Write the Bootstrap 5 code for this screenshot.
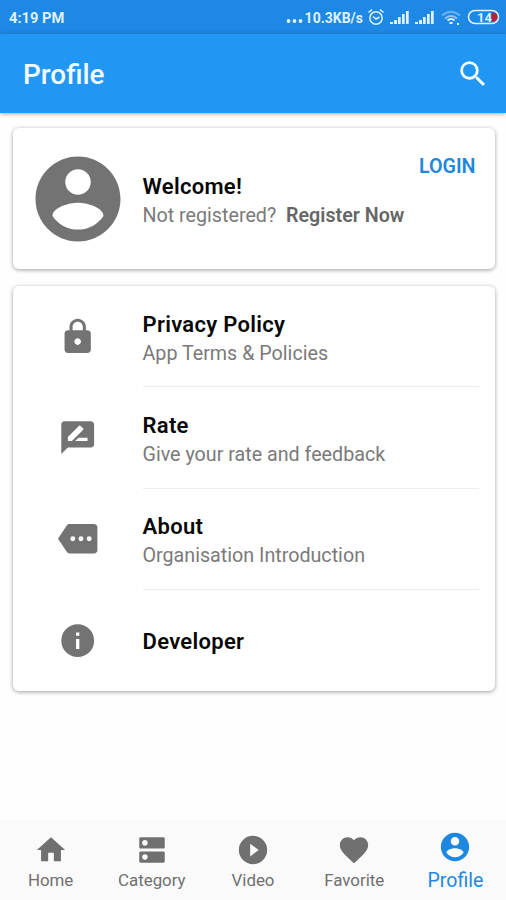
<!DOCTYPE html>
<html lang="en">
<head>
<meta charset="utf-8">
<meta name="viewport" content="width=device-width, initial-scale=1">
<title>Profile</title>
<link href="https://cdn.jsdelivr.net/npm/bootstrap@5.3.0/dist/css/bootstrap.min.css" rel="stylesheet">
<style>
body{font-family:Roboto,"Liberation Sans",sans-serif;background:#fefefe;color:#0a0a0a;height:900px;overflow:hidden}
svg{display:block;fill:currentColor;flex:none}
.status{background:#1e88e5;height:34px;padding:0 6px 0 9px;font-size:14.700px;font-weight:700;color:#dff1ff;line-height:36px}
.status svg{align-self:center}
.status .rate-text{font-size:14px}
.appbar{background:#2196f3;height:79px;padding:1px 16px 0 23px;box-shadow:0 1px 4px rgba(0,0,0,.35);color:#f4fbff}
.appbar h1{font-size:27.900px;font-weight:500;margin:2px 0 0}
.panel{border:0;border-radius:6px;margin:0 11.500px 0 12.500px;box-shadow:0 1px 4px rgba(0,0,0,.38)}
.user-panel{margin-top:15px;height:141px;padding:0 19px 0 14px}
.menu-panel{margin-top:17px;height:405px}
.avatar{width:102px;height:102px;color:#737373}
.user-text{margin-left:14px;padding-top:6px}
.ttl{font-size:22px;font-weight:600;line-height:28px;color:#080808;letter-spacing:.3px}
.sub{font-size:19.700px;line-height:29px;color:#7a7a7a;white-space:pre}
.sub b{font-weight:600;color:#666}
.login{font-size:19.700px;font-weight:600;color:#1e88dc;line-height:24px;margin-top:26.500px}
.entry{height:101.300px}
.entry .ico{width:130px;padding-left:1px;color:#737373}
.entry .txt{margin-right:16px;border-bottom:1px solid #ececec;padding-top:6px}
.entry:last-child .txt{border-bottom:0;padding-top:3px}
.tabs{height:80px;background:#fafafa;color:#707070}
.tab{flex:1 1 0;font-size:16.900px;line-height:27px;padding-top:13px}
.tab.on{color:#1e88e0;font-size:19.500px;line-height:33px;padding-top:10px}
</style>
</head>
<body class="d-flex flex-column">
<header>
<div class="status d-flex justify-content-between">
  <span>4:19 PM</span>
  <div class="d-flex">
    <svg width="19" height="16"><circle cx="2.500" cy="12" r="1.900"/><circle cx="8.500" cy="12" r="1.900"/><circle cx="14.500" cy="12" r="1.900"/></svg>
    <span class="rate-text">10.3KB/s</span>
    <svg class="ms-1" width="18" height="18" style="fill:none" stroke="currentColor" stroke-width="1.500"><circle cx="9" cy="10" r="6.200"/><path d="M1.500 4.500 5 1.700M16.500 4.500 13 1.700M6 8.500l3 2.500 3.500-2"/></svg>
    <svg class="ms-1" width="22" height="18"><path d="M1 16v-2h3v2zM5 16v-4h3v4zM9 16V9h2.700v7zM13 16V6h2.700v10zM17 16V3h2.700v13z"/></svg>
    <svg class="ms-1" width="22" height="18"><path d="M0 16v-2h3v2zM4 16v-4h3v4zM8 16V9h2.700v7zM12 16V6h2.700v10zM16 16V3h2.700v13z"/></svg>
    <svg class="ms-1" width="20" height="18" style="fill:none" stroke="currentColor" stroke-width="1.800"><path d="M1 7.500Q10 0 19 7.500" opacity=".4"/><path d="M4 10.500Q10 5.500 16 10.500" opacity=".6"/><path d="M6.500 12.500Q10 9.500 13.500 12.500"/><path d="M8.500 15h3M16 16h2"/></svg>
    <svg width="39" height="18"><rect x="7.500" y="2.500" width="30" height="13" rx="6.500" style="fill:none" stroke="currentColor" stroke-width="1.600"/><path d="M30.500 4.500h1.500a4.500 4.500 0 0 1 2 8.500L32 13.800h-1.500z" fill="#b3223c"/><text x="16" y="13.800" font-size="13" font-weight="700">14</text></svg>
  </div>
</div>
<div class="appbar d-flex align-items-center justify-content-between">
  <h1>Profile</h1>
  <svg width="34" height="34" viewBox="0 0 24 24"><path d="M15.500 14h-.79l-.28-.27A6.470 6.470 0 0 0 16 9.500 6.500 6.500 0 1 0 9.500 16c1.610 0 3.090-.59 4.230-1.570l.27.28v.79l5 4.990L20.490 19l-4.990-5zm-6 0C7.010 14 5 11.990 5 9.500S7.010 5 9.500 5 14 7.010 14 9.500 11.990 14 9.500 14z"/></svg>
</div>
</header>
<main class="flex-grow-1">
<section class="card panel user-panel flex-row align-items-center">
  <svg class="avatar" viewBox="0 0 24 24"><path d="M12 2C6.480 2 2 6.480 2 12s4.480 10 10 10 10-4.480 10-10S17.520 2 12 2zm0 3c1.660 0 3 1.340 3 3s-1.340 3-3 3-3-1.340-3-3 1.340-3 3-3zm0 14.200c-2.500 0-4.710-1.280-6-3.220.03-1.990 4-3.080 6-3.080 1.990 0 5.970 1.090 6 3.080-1.290 1.940-3.500 3.220-6 3.220z"/></svg>
  <div class="flex-grow-1 user-text">
    <div class="ttl">Welcome!</div>
    <div class="sub">Not registered?  <b>Register Now</b></div>
  </div>
  <div class="login align-self-start">LOGIN</div>
</section>
<section class="card panel menu-panel">
  <div class="entry d-flex">
    <div class="ico d-flex align-items-center justify-content-center"><svg width="39.400" height="39.400" viewBox="0 0 24 24"><path d="M18 8h-1V6c0-2.760-2.240-5-5-5S7 3.240 7 6v2H6c-1.100 0-2 .9-2 2v10c0 1.100.9 2 2 2h12c1.100 0 2-.9 2-2V10c0-1.100-.9-2-2-2zm-6 9c-1.100 0-2-.9-2-2s.9-2 2-2 2 .9 2 2-.9 2-2 2zm3.100-9H8.900V6c0-1.710 1.390-3.100 3.100-3.100s3.100 1.390 3.100 3.100v2z"/></svg></div>
    <div class="txt flex-grow-1 d-flex flex-column justify-content-center"><div class="ttl">Privacy Policy</div><div class="sub">App Terms &amp; Policies</div></div>
  </div>
  <div class="entry d-flex">
    <div class="ico d-flex align-items-center justify-content-center"><svg width="39.400" height="39.400" viewBox="0 0 24 24"><path d="M20 2H4c-1.100 0-1.990.9-1.990 2L2 22l4-4h14c1.100 0 2-.9 2-2V4c0-1.100-.9-2-2-2zM6 14v-2.470l6.880-6.880c.2-.2.51-.2.71 0l1.770 1.770c.2.2.2.51 0 .71L8.470 14H6zm12 0h-7.500l2-2H18v2z"/></svg></div>
    <div class="txt flex-grow-1 d-flex flex-column justify-content-center"><div class="ttl">Rate</div><div class="sub">Give your rate and feedback</div></div>
  </div>
  <div class="entry d-flex">
    <div class="ico d-flex align-items-center justify-content-center"><svg width="39.400" height="39.400" viewBox="0 0 24 24"><path d="M22 3H7c-.69 0-1.230.35-1.590.88L0 12l5.410 8.110c.36.53.9.89 1.590.89h15c1.100 0 2-.9 2-2V5c0-1.100-.9-2-2-2zM9 13.500a1.500 1.500 0 1 1 0-3 1.500 1.500 0 0 1 0 3zm5 0a1.500 1.500 0 1 1 0-3 1.500 1.500 0 0 1 0 3zm5 0a1.500 1.500 0 1 1 0-3 1.500 1.500 0 0 1 0 3z"/></svg></div>
    <div class="txt flex-grow-1 d-flex flex-column justify-content-center"><div class="ttl">About</div><div class="sub">Organisation Introduction</div></div>
  </div>
  <div class="entry d-flex">
    <div class="ico d-flex align-items-center justify-content-center"><svg width="39.400" height="39.400" viewBox="0 0 24 24"><path d="M12 2a10 10 0 1 0 0 20 10 10 0 0 0 0-20zm1 15h-2v-6h2v6zm0-8h-2V7h2v2z"/></svg></div>
    <div class="txt flex-grow-1 d-flex flex-column justify-content-center"><div class="ttl">Developer</div></div>
  </div>
</section>
</main>
<nav class="tabs d-flex">
  <div class="tab d-flex flex-column align-items-center"><svg width="34" height="34" viewBox="0 0 24 24"><path d="M10 20v-6h4v6h5v-8h3L12 3 2 12h3v8z"/></svg><span>Home</span></div>
  <div class="tab d-flex flex-column align-items-center"><svg width="34" height="34" viewBox="0 0 24 24"><path d="M20 13H4c-.55 0-1 .45-1 1v6c0 .55.45 1 1 1h16c.55 0 1-.45 1-1v-6c0-.55-.45-1-1-1zM7 19c-1.100 0-2-.9-2-2s.9-2 2-2 2 .9 2 2-.9 2-2 2zM20 3H4c-.55 0-1 .45-1 1v6c0 .55.45 1 1 1h16c.55 0 1-.45 1-1V4c0-.55-.45-1-1-1zM7 9c-1.100 0-2-.9-2-2s.9-2 2-2 2 .9 2 2-.9 2-2 2z"/></svg><span>Category</span></div>
  <div class="tab d-flex flex-column align-items-center"><svg width="34" height="34" viewBox="0 0 24 24"><path d="M12 2a10 10 0 1 0 0 20 10 10 0 0 0 0-20zm-2 14.500v-9l6 4.500-6 4.500z"/></svg><span>Video</span></div>
  <div class="tab d-flex flex-column align-items-center"><svg width="34" height="34" viewBox="0 0 24 24"><path d="M12 21.350l-1.450-1.320C5.400 15.360 2 12.280 2 8.500 2 5.420 4.420 3 7.500 3c1.740 0 3.410.81 4.500 2.090C13.090 3.810 14.760 3 16.500 3 19.580 3 22 5.420 22 8.500c0 3.780-3.400 6.860-8.550 11.540L12 21.350z"/></svg><span>Favorite</span></div>
  <div class="tab on d-flex flex-column align-items-center"><svg width="34" height="34" viewBox="0 0 24 24"><path d="M12 2C6.480 2 2 6.480 2 12s4.480 10 10 10 10-4.480 10-10S17.520 2 12 2zm0 3c1.660 0 3 1.340 3 3s-1.340 3-3 3-3-1.340-3-3 1.340-3 3-3zm0 14.200c-2.500 0-4.710-1.280-6-3.220.03-1.990 4-3.080 6-3.080 1.990 0 5.970 1.090 6 3.080-1.290 1.940-3.500 3.220-6 3.220z"/></svg><span>Profile</span></div>
</nav>
<script src="https://cdn.jsdelivr.net/npm/bootstrap@5.3.0/dist/js/bootstrap.bundle.min.js"></script>
</body>
</html>
